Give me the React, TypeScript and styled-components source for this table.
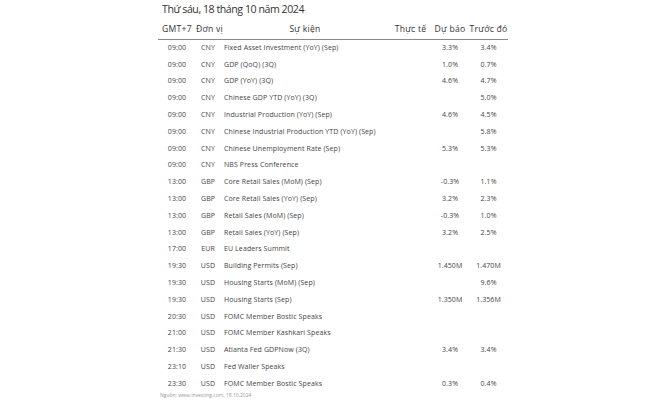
import React from "react";
import styled, { createGlobalStyle } from "styled-components";

const Global = createGlobalStyle`
  html, body { margin: 0; padding: 0; background: #fff; }
  body { font-family: "Open Sans", "Liberation Sans", sans-serif; }
`;

const Page = styled.div`
  width: 667px;
  height: 400px;
  display: flex;
  justify-content: flex-start;
  padding-left: 158px;
  box-sizing: border-box;
  overflow: hidden;
`;

const Panel = styled.div`
  width: 350px;
  display: flex;
  flex-direction: column;
`;

const Title = styled.div`
  font-size: 10.6px;
  color: #333;
  line-height: 18px;
  padding-left: 4px;
  letter-spacing: -0.45px;
`;

const cols = "38px 24px 170px 41px 38px 39px";

const HeaderRow = styled.div`
  display: grid;
  grid-template-columns: ${cols};
  height: 20px;
  align-items: center;
  border-bottom: 1px solid #8a8a8a;
  font-size: 8.6px;
  letter-spacing: 0.25px;
  color: #333;
  margin-top: 1px;
`;

const Row = styled.div`
  display: grid;
  grid-template-columns: ${cols};
  height: 16.8px;
  align-items: center;
  font-size: 7px;
  color: #444;
  letter-spacing: 0.1px;
`;

const Cell = styled.div<{ $align?: "left" | "center"; $pad?: number }>`
  text-align: ${(p) => p.$align ?? "center"};
  padding-left: ${(p) => p.$pad ?? 0}px;
  white-space: nowrap;
`;

const Rows = styled.div`
  display: flex;
  flex-direction: column;
  margin-top: -1px;
`;

const Source = styled.div`
  font-size: 5px;
  color: #999;
  line-height: 8px;
  padding-left: 2px;
  margin-top: -1px;
`;

type Ev = [string, string, string, string, string, string];

const data: Ev[] = [
  ["09:00", "CNY", "Fixed Asset Investment (YoY) (Sep)", "", "3.3%", "3.4%"],
  ["09:00", "CNY", "GDP (QoQ) (3Q)", "", "1.0%", "0.7%"],
  ["09:00", "CNY", "GDP (YoY) (3Q)", "", "4.6%", "4.7%"],
  ["09:00", "CNY", "Chinese GDP YTD (YoY) (3Q)", "", "", "5.0%"],
  ["09:00", "CNY", "Industrial Production (YoY) (Sep)", "", "4.6%", "4.5%"],
  ["09:00", "CNY", "Chinese Industrial Production YTD (YoY) (Sep)", "", "", "5.8%"],
  ["09:00", "CNY", "Chinese Unemployment Rate (Sep)", "", "5.3%", "5.3%"],
  ["09:00", "CNY", "NBS Press Conference", "", "", ""],
  ["13:00", "GBP", "Core Retail Sales (MoM) (Sep)", "", "-0.3%", "1.1%"],
  ["13:00", "GBP", "Core Retail Sales (YoY) (Sep)", "", "3.2%", "2.3%"],
  ["13:00", "GBP", "Retail Sales (MoM) (Sep)", "", "-0.3%", "1.0%"],
  ["13:00", "GBP", "Retail Sales (YoY) (Sep)", "", "3.2%", "2.5%"],
  ["17:00", "EUR", "EU Leaders Summit", "", "", ""],
  ["19:30", "USD", "Building Permits (Sep)", "", "1.450M", "1.470M"],
  ["19:30", "USD", "Housing Starts (MoM) (Sep)", "", "", "9.6%"],
  ["19:30", "USD", "Housing Starts (Sep)", "", "1.350M", "1.356M"],
  ["20:30", "USD", "FOMC Member Bostic Speaks", "", "", ""],
  ["21:00", "USD", "FOMC Member Kashkari Speaks", "", "", ""],
  ["21:30", "USD", "Atlanta Fed GDPNow (3Q)", "", "3.4%", "3.4%"],
  ["23:10", "USD", "Fed Waller Speaks", "", "", ""],
  ["23:30", "USD", "FOMC Member Bostic Speaks", "", "0.3%", "0.4%"],
];

export default function App() {
  return (
    <Page>
      <Global />
      <Panel>
        <Title>Thứ sáu, 18 tháng 10 năm 2024</Title>
        <HeaderRow>
          <Cell>GMT+7</Cell>
          <Cell>Đơn vị</Cell>
          <Cell>Sự kiện</Cell>
          <Cell>Thực tế</Cell>
          <Cell>Dự báo</Cell>
          <Cell>Trước đó</Cell>
        </HeaderRow>
        <Rows>
          {data.map((r, i) => (
            <Row key={i}>
              <Cell>{r[0]}</Cell>
              <Cell>{r[1]}</Cell>
              <Cell $align="left" $pad={4}>{r[2]}</Cell>
              <Cell>{r[3]}</Cell>
              <Cell>{r[4]}</Cell>
              <Cell>{r[5]}</Cell>
            </Row>
          ))}
        </Rows>
        <Source>Nguồn: www.investing.com, 18.10.2024</Source>
      </Panel>
    </Page>
  );
}
